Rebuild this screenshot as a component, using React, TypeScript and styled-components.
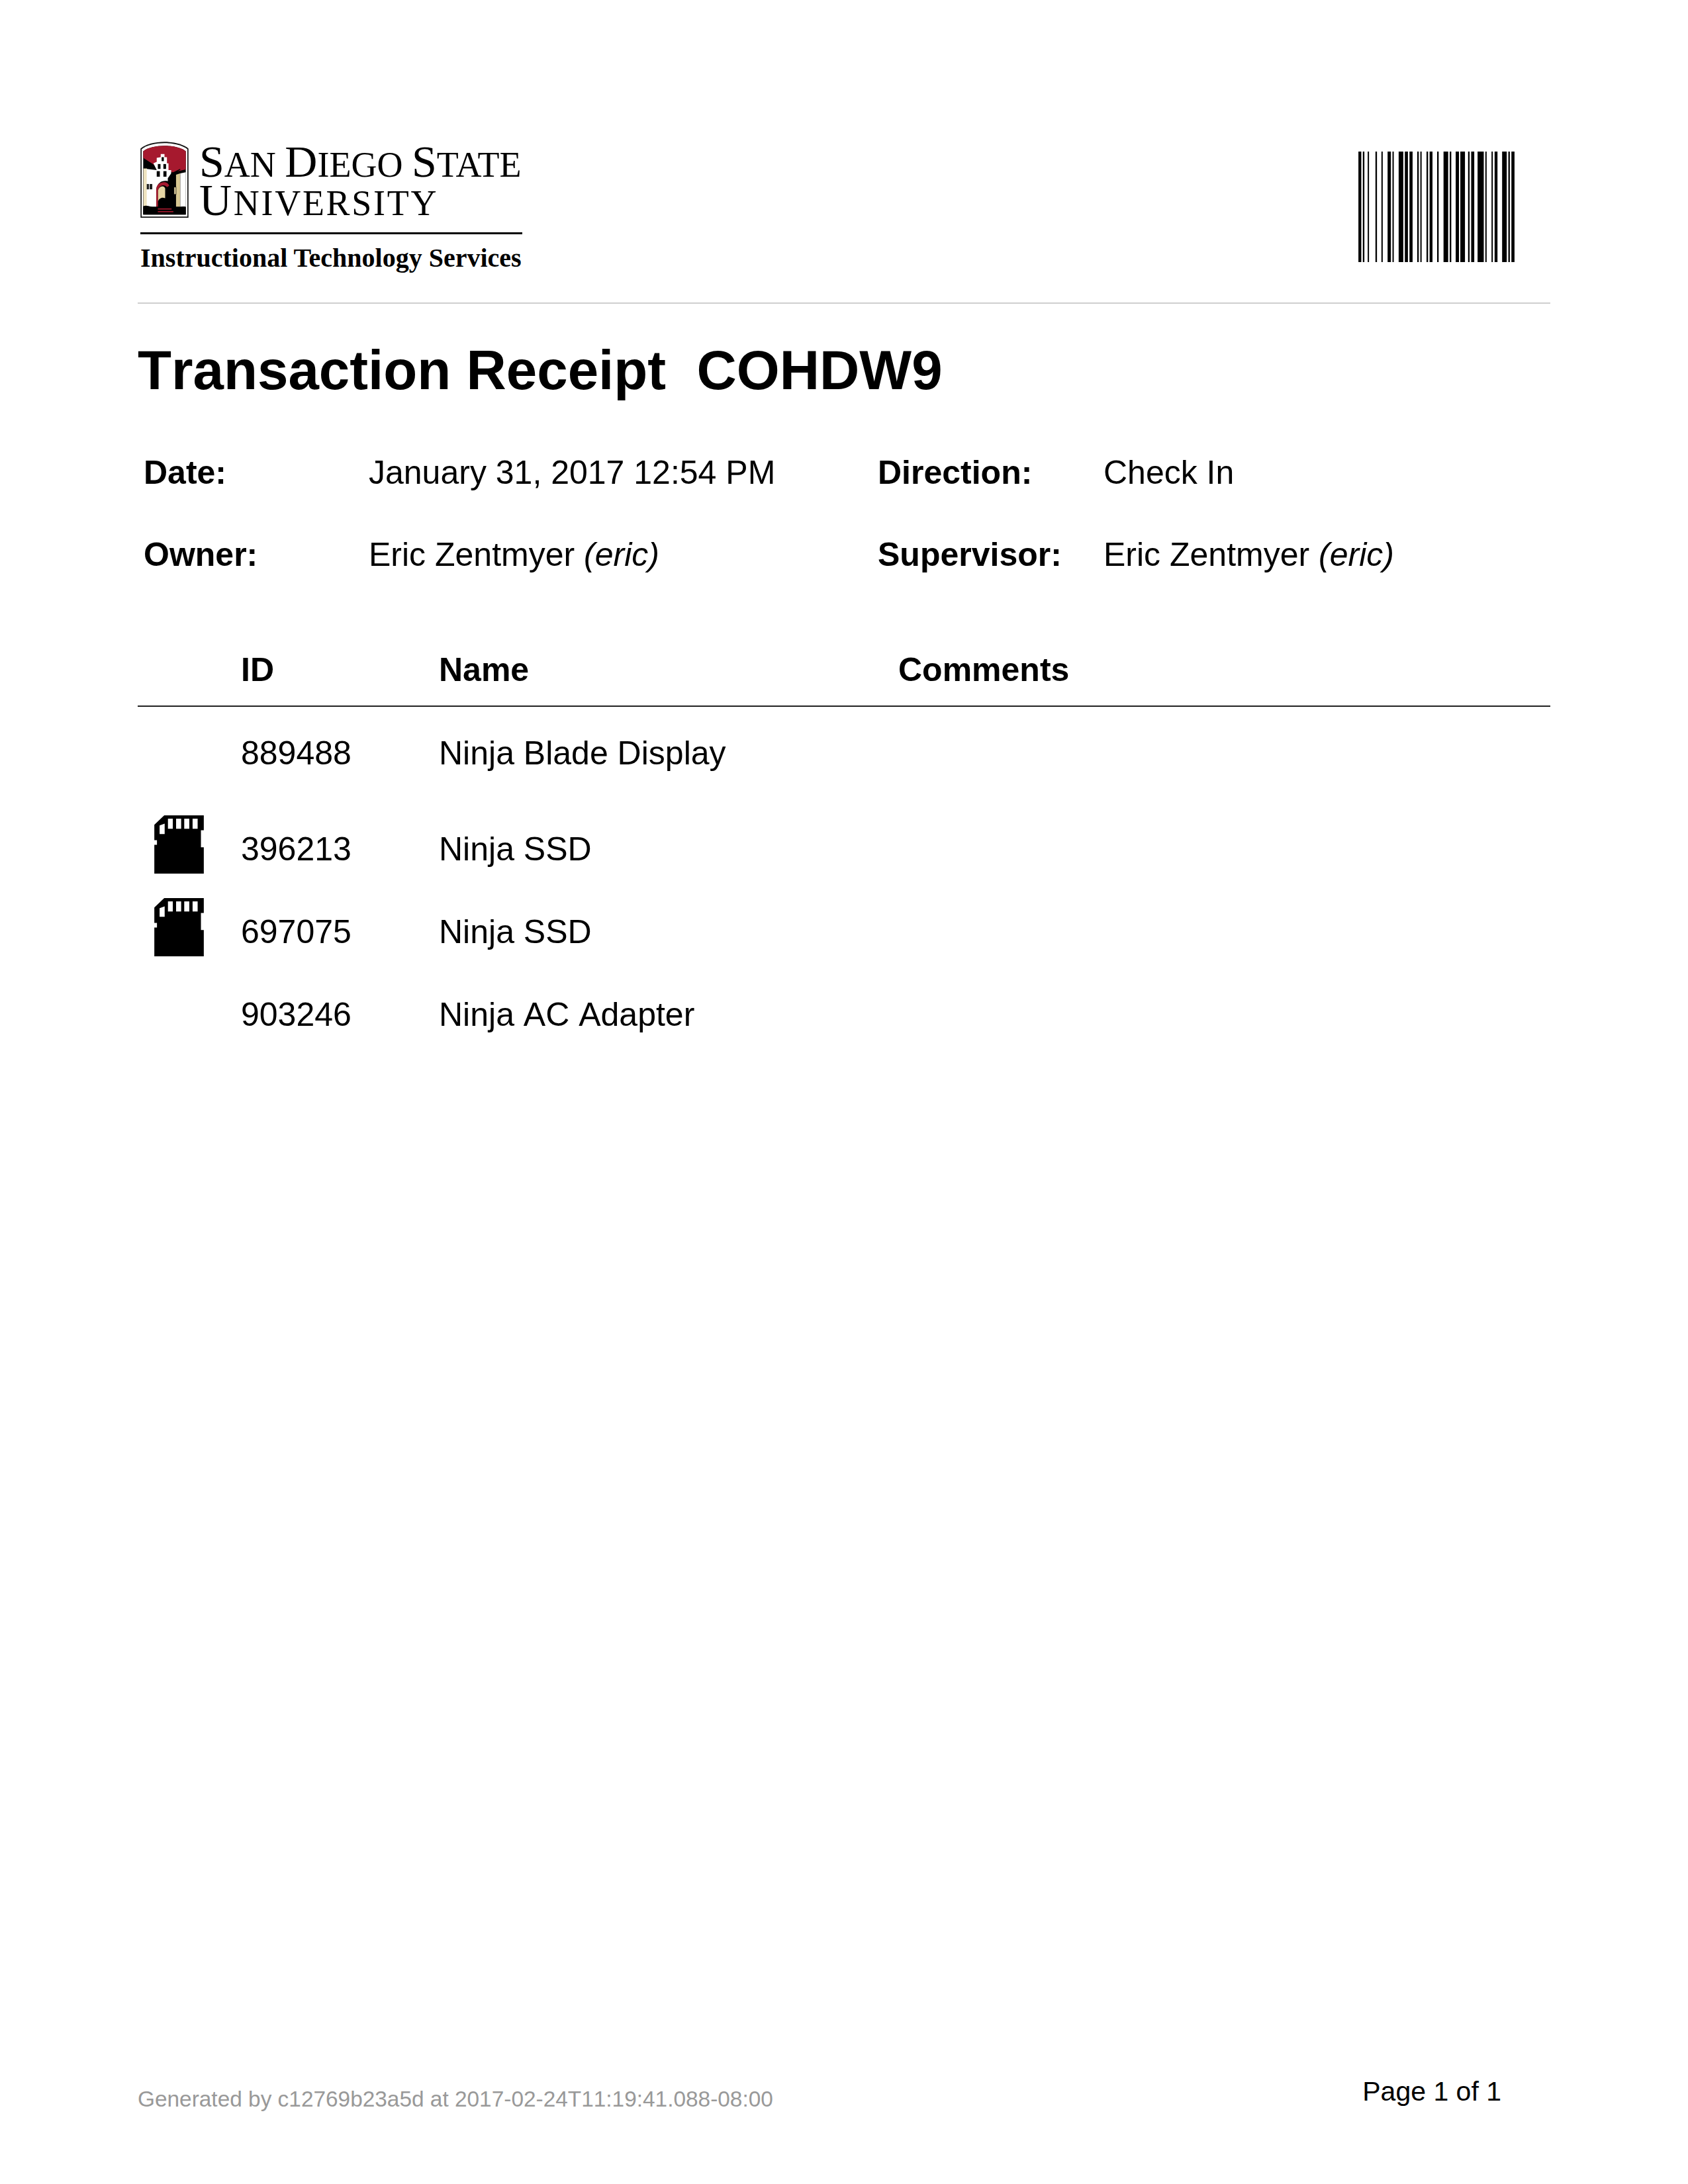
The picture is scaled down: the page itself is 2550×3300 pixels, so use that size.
import { createGlobalStyle } from "styled-components";
import styled from "styled-components";

const GlobalStyle = createGlobalStyle`
  html, body {
    margin: 0;
    padding: 0;
    background: #fff;
    color: #000;
    font-family: "Liberation Sans", Arial, sans-serif;
  }
`;

// --- data ----------------------------------------

const items = [
  { id: "889488", name: "Ninja Blade Display", card: false },
  { id: "396213", name: "Ninja SSD", card: true },
  { id: "697075", name: "Ninja SSD", card: true },
  { id: "903246", name: "Ninja AC Adapter", card: false },
];

// x offset and width of each bar, in barcode units
const bars = [
  [67, 13], [87, 7], [109, 6], [144, 7], [171, 6], [199, 15], [221, 6], [249, 21],
  [277, 14], [298, 14], [333, 7], [347, 6], [375, 7], [389, 13], [423, 7], [452, 21],
  [480, 7], [507, 15], [528, 21], [563, 7], [577, 14], [606, 28], [641, 6], [669, 6],
  [683, 13], [717, 21], [745, 7], [759, 14],
];

// --- drawings ----------------------------------------

function Shield() {
  return (
    <svg width="73" height="115" viewBox="27 27 216 343">
      <path d="M27 370V58C75 18 195 18 243 58V370Z" fill="#111" />
      <path d="M32 365V61C78 25 192 25 238 61V365Z" fill="#fff" />
      <path d="M39 356V70C82 38 188 38 231 70V356Z" fill="#000" />
      <path d="M39 70C82 38 188 38 231 70V152L172 166 104 142 39 100Z" fill="#a6192e" />
      <path d="M231 165L206 170V320H231Z" fill="#fff" />
      <path d="M187 176L205 170V320H187Z" fill="#d8c892" />
      <path d="M40 148H56V320H40Z" fill="#efe3bf" />
      <path d="M118 83H135V97H146V125H153V155H165V170L150 192V205C125 200 105 210 98 240V320H55V150L100 155 85 125 100 118V100L118 97Z" fill="#fff" />
      <path d="M98 320V240C100 205 150 200 156 226L146 232C135 218 112 222 106 246V320Z" fill="#a6192e" />
      <path d="M106 246C112 226 132 222 138 238V282C122 276 110 284 106 296Z" fill="#e6d6a5" />
      <path d="M165 170L205 150 207 153 168 176Z" fill="#000" />
      <rect x="122" y="97" width="10" height="18" fill="#000" />
      <rect x="105" y="128" width="12" height="22" fill="#000" />
      <rect x="130" y="128" width="12" height="22" fill="#000" />
      <rect x="100" y="160" width="14" height="25" fill="#000" />
      <rect x="130" y="160" width="14" height="25" fill="#000" />
      <rect x="55" y="218" width="10" height="24" fill="#222" />
      <rect x="68" y="218" width="12" height="24" fill="#222" />
      <rect x="178" y="232" width="9" height="33" fill="#e6d6a5" stroke="#000" strokeWidth="2" />
      <path d="M39 356V318C60 310 75 325 100 325H190C205 325 220 315 231 322V356Z" fill="#000" />
      <rect x="105" y="328" width="62" height="5" fill="#a6192e" />
      <rect x="105" y="340" width="70" height="5" fill="#a6192e" />
    </svg>
  );
}

function Barcode() {
  return (
    <svg width="236" height="167" viewBox="67 57 706 500">
      {bars.map(([x, w]) => (
        <rect key={x} x={x} y="57" width={w} height="500" fill="#000" />
      ))}
    </svg>
  );
}

function CardIcon() {
  return (
    <svg width="75" height="88" viewBox="100 92 225 265">
      <path
        fillRule="evenodd"
        fill="#000"
        d="M145 92H325V160H312V237H325V357H100V226H112V205H100V135ZM162 107V153H184V107ZM199 107V153H222V107ZM236 107V153H259V107ZM274 107V153H297V107ZM124 138V177H147V130Z"
      />
    </svg>
  );
}

// --- page ----------------------------------------

function App() {
  return (
    <Page>
      <GlobalStyle />
      <Header>
        <Logo>
          <Crest>
            <Shield />
            <Wordmark>
              <WordLine>
                <Initial>S</Initial>AN <Initial>D</Initial>IEGO <Initial>S</Initial>TATE
              </WordLine>
              <WordLine $spread>
                <Initial>U</Initial>NIVERSITY
              </WordLine>
            </Wordmark>
          </Crest>
          <Department>Instructional Technology Services</Department>
        </Logo>
        <BarcodeBox>
          <Barcode />
        </BarcodeBox>
      </Header>

      <Title>Transaction Receipt&nbsp; COHDW9</Title>

      <Meta>
        <Label>Date:</Label>
        <Value>January 31, 2017 12:54 PM</Value>
        <Label>Direction:</Label>
        <Value>Check In</Value>
        <Label>Owner:</Label>
        <Value>
          Eric Zentmyer <em>(eric)</em>
        </Value>
        <Label>Supervisor:</Label>
        <Value>
          Eric Zentmyer <em>(eric)</em>
        </Value>
      </Meta>

      <TableHead>
        <span />
        <span>ID</span>
        <span>Name</span>
        <span>Comments</span>
      </TableHead>
      <Rows>
        {items.map((item) => (
          <Row key={item.id}>
            <IconCell>{item.card && <CardIcon />}</IconCell>
            <Cell>{item.id}</Cell>
            <Cell>{item.name}</Cell>
            <Cell />
          </Row>
        ))}
      </Rows>

      <Footer>
        <Generated>Generated by c12769b23a5d at 2017-02-24T11:19:41.088-08:00</Generated>
        <PageNumber>Page 1 of 1</PageNumber>
      </Footer>
    </Page>
  );
}

export default App;

// styled

const Page = styled.div`
  box-sizing: border-box;
  width: 2550px;
  height: 3300px;
  padding: 214px 208px 108px;
  display: flex;
  flex-direction: column;
  font-kerning: none;
`;

const Header = styled.header`
  display: flex;
  justify-content: space-between;
  height: 243px;
  border-bottom: 2px solid #cfcfcf;
`;

const Logo = styled.div`
  margin-left: 4px;
  width: 577px;
  display: flex;
  flex-direction: column;
`;

const Crest = styled.div`
  display: flex;
  gap: 16px;
  height: 137px;
  border-bottom: 3px solid #000;
`;

const Wordmark = styled.div`
  padding-top: 6px;
  font-family: "Liberation Serif", "Times New Roman", serif;
  font-size: 54px;
  line-height: 58px;
  white-space: nowrap;
  font-kerning: normal;
`;

const WordLine = styled.div<{ $spread?: boolean }>`
  letter-spacing: ${(p) => (p.$spread ? "2.7px" : "0")};
`;

const Initial = styled.span`
  font-size: 68px;
  line-height: 0;
`;

const Department = styled.div`
  margin-top: 12px;
  font-family: "Liberation Serif", "Times New Roman", serif;
  font-weight: 700;
  font-size: 40px;
  line-height: 48px;
  white-space: nowrap;
  font-kerning: normal;
`;

const BarcodeBox = styled.div`
  margin: 15px 54px 0 0;
`;

const Title = styled.h1`
  margin: 48px 0 0;
  font-size: 83.5px;
  line-height: 104px;
  font-weight: 700;
  white-space: nowrap;
`;

const Meta = styled.div`
  margin-top: 73px;
  padding-left: 9px;
  display: grid;
  grid-template-columns: 340px 769px 341px 1fr;
  grid-auto-rows: 124px;
  font-size: 50px;
  line-height: 60px;
`;

const Label = styled.div`
  font-weight: 700;
`;

const Value = styled.div`
  white-space: nowrap;
`;

const columns = `156px 299px 694px 1fr`;

const TableHead = styled.div`
  margin-top: 50px;
  display: grid;
  grid-template-columns: ${columns};
  height: 84px;
  border-bottom: 2px solid #222;
  font-size: 50px;
  line-height: 60px;
  font-weight: 700;
`;

const Rows = styled.div`
  display: flex;
  flex-direction: column;
`;

const Cell = styled.span`
  padding-top: 40px;
`;

const IconCell = styled.div`
  padding: 19px 0 0 25px;
`;

const Row = styled.div`
  display: grid;
  grid-template-columns: ${columns};
  height: 125px;
  font-size: 50px;
  line-height: 60px;
  white-space: nowrap;

  &:first-child {
    height: 145px;
  }
`;

const Footer = styled.footer`
  margin-top: auto;
  display: flex;
  justify-content: space-between;
  align-items: flex-start;
  padding-right: 74px;
`;

const Generated = styled.div`
  margin-top: 17px;
  color: #999;
  font-size: 33.4px;
  line-height: 40px;
`;

const PageNumber = styled.div`
  font-size: 41px;
  line-height: 50px;
`;
